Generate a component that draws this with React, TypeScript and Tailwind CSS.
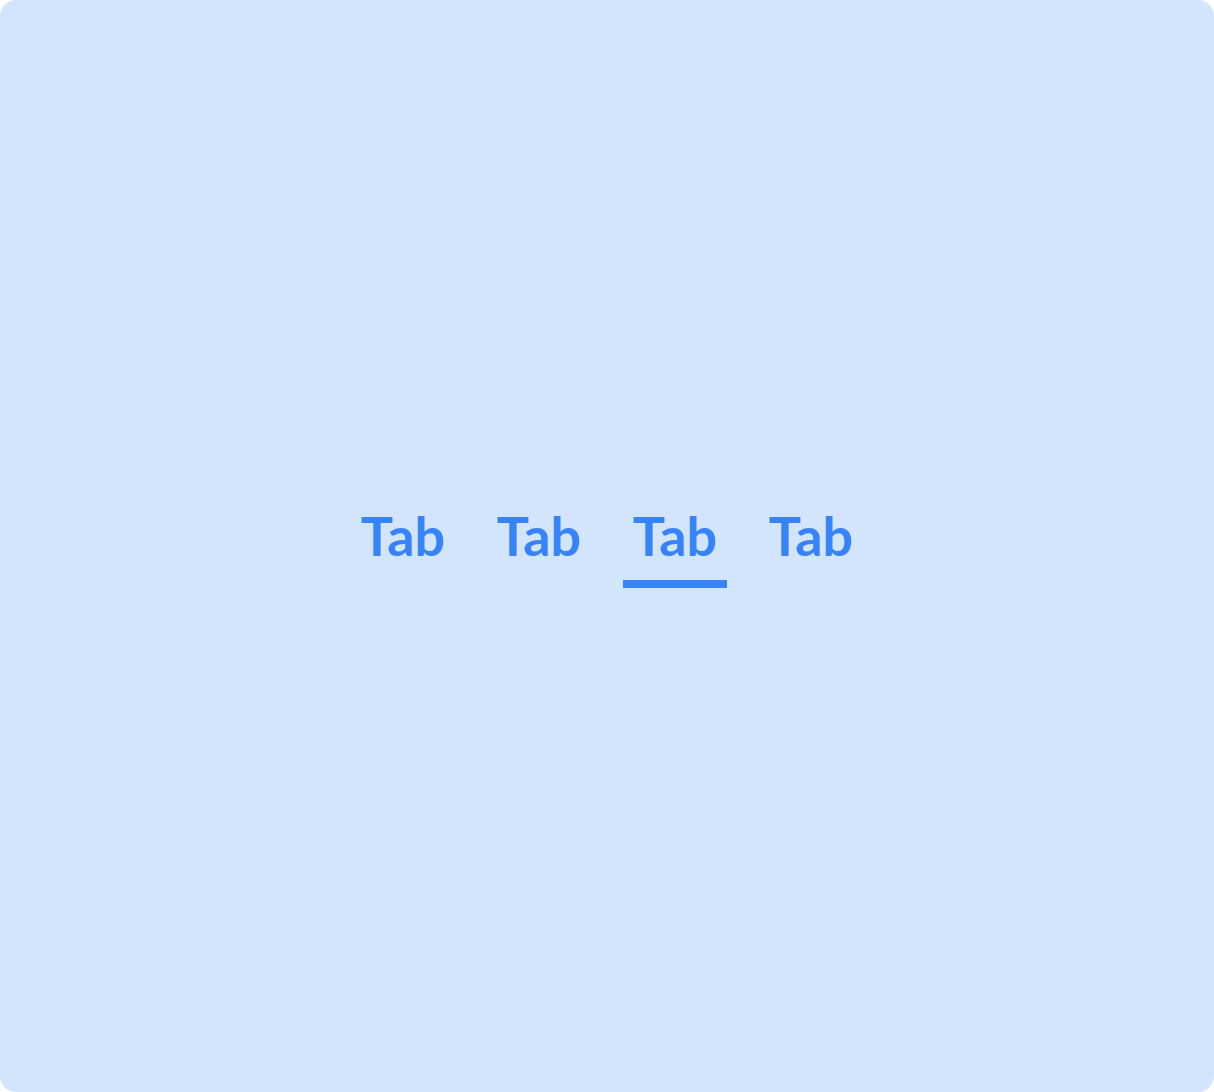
import { useState } from "react";
import clsx from "clsx";

const tabs = ["Tab", "Tab", "Tab", "Tab"];

const App = () => {
  const [active, setActive] = useState(2);

  return (
    <main className="flex min-h-screen items-center justify-center rounded-2xl bg-[#d3e5fd]">
      <div role="tablist" className="flex gap-8">
        {tabs.map((tab, index) => (
          <button
            key={index}
            type="button"
            role="tab"
            aria-selected={active === index}
            onClick={() => setActive(index)}
            className={clsx(
              "w-[104px] cursor-pointer border-b-8 pt-1 pb-4 text-center font-['Lato',sans-serif] text-[54px] leading-[56px] font-bold text-[#3783fb]",
              active === index ? "border-[#3783fb]" : "border-transparent",
            )}
          >
            {tab}
          </button>
        ))}
      </div>
    </main>
  );
};

export default App;
